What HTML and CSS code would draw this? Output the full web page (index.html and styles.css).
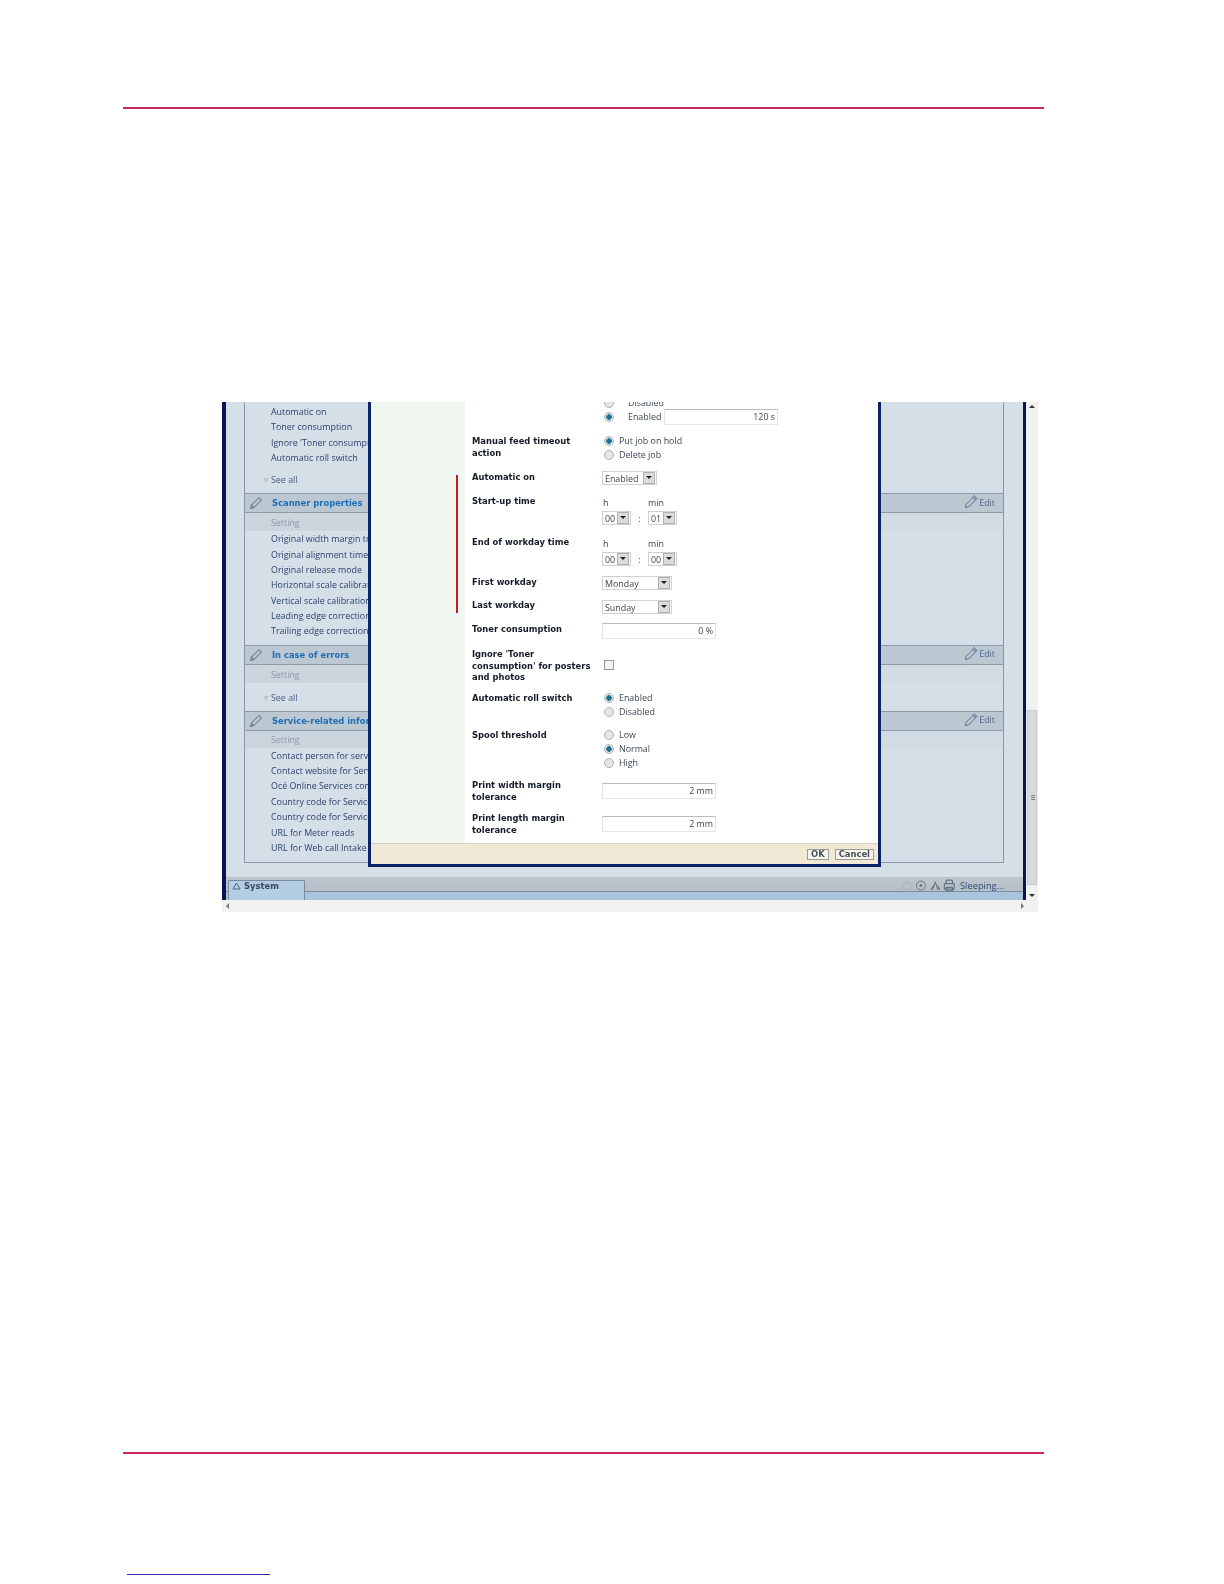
FILE: index.html
```html
<!DOCTYPE html>
<html lang="en">
<head>
<meta charset="utf-8">
<title>Settings</title>
<link rel="stylesheet" href="styles.css">
</head>
<body>
<div class="page">
  <div class="rule rule-top"></div>
  <div class="shot">
    <div class="app">
      <div class="app-main">
        <div class="panel">
          <div class="rows first">
            <div class="row">Automatic on</div>
            <div class="row">Toner consumption</div>
            <div class="row">Ignore 'Toner consumption' for posters</div>
            <div class="row">Automatic roll switch</div>
          </div>
          <div class="see">See all</div>
          <div class="sec-head">
            <svg class="pencil" viewBox="0 0 14 14"><path d="M1.500 12.500l1-3.500L10 1.500l2.500 2.500L5 11.500zM2.500 9l2.500 2.500" fill="none" stroke="#56677c" stroke-width="1"/></svg>
            <span class="sec-title">Scanner properties</span>
            <span class="edit"><svg class="pencil-e" viewBox="0 0 14 14"><path d="M1.500 12.500l.5-3L9 2.500l2.500 2.500L4.500 12zM9 1.500l1-1 3 3-1 1z" fill="none" stroke="#5a6f8e" stroke-width="1"/></svg>Edit</span>
          </div>
          <div class="setting">Setting</div>
          <div class="rows">
            <div class="row">Original width margin tolerance</div>
            <div class="row">Original alignment time</div>
            <div class="row">Original release mode</div>
            <div class="row">Horizontal scale calibration</div>
            <div class="row">Vertical scale calibration</div>
            <div class="row">Leading edge correction</div>
            <div class="row">Trailing edge correction</div>
          </div>
          <div class="sec-head sec-gap">
            <svg class="pencil" viewBox="0 0 14 14"><path d="M1.500 12.500l1-3.500L10 1.500l2.500 2.500L5 11.500zM2.500 9l2.500 2.500" fill="none" stroke="#56677c" stroke-width="1"/></svg>
            <span class="sec-title">In case of errors</span>
            <span class="edit"><svg class="pencil-e" viewBox="0 0 14 14"><path d="M1.500 12.500l.5-3L9 2.500l2.500 2.500L4.500 12zM9 1.500l1-1 3 3-1 1z" fill="none" stroke="#5a6f8e" stroke-width="1"/></svg>Edit</span>
          </div>
          <div class="setting">Setting</div>
          <div class="see see-short">See all</div>
          <div class="sec-head">
            <svg class="pencil" viewBox="0 0 14 14"><path d="M1.500 12.500l1-3.500L10 1.500l2.500 2.500L5 11.500zM2.500 9l2.500 2.500" fill="none" stroke="#56677c" stroke-width="1"/></svg>
            <span class="sec-title">Service-related information</span>
            <span class="edit"><svg class="pencil-e" viewBox="0 0 14 14"><path d="M1.500 12.500l.5-3L9 2.500l2.500 2.500L4.500 12zM9 1.500l1-1 3 3-1 1z" fill="none" stroke="#5a6f8e" stroke-width="1"/></svg>Edit</span>
          </div>
          <div class="setting setting-tight">Setting</div>
          <div class="rows">
            <div class="row">Contact person for service</div>
            <div class="row">Contact website for Service</div>
            <div class="row">Océ Online Services contact</div>
            <div class="row">Country code for Service</div>
            <div class="row">Country code for Service</div>
            <div class="row">URL for Meter reads</div>
            <div class="row">URL for Web call Intake</div>
          </div>
        </div>
      </div>
      <div class="app-bar">
        <div class="tab"><svg class="tab-tri" viewBox="0 0 9 8"><path d="M4.500 1L8 7H1z" fill="none" stroke="#52657c" stroke-width="1"/></svg>System</div>
        <div class="status">
          <svg class="st-icons" viewBox="0 0 60 14">
            <path d="M1 5h10v6H1zM3 5l1-2h4l1 2" fill="none" stroke="#a9b3ba" stroke-width="1"/>
            <circle cx="21" cy="7" r="5" fill="none" stroke="#5f6c78" stroke-width="1"/>
            <circle cx="21" cy="7" r="1.500" fill="#5f6c78"/>
            <path d="M34 12l3-9 3 9M32 12l3-5M42 12l-2-5" fill="none" stroke="#56626e" stroke-width="1"/>
            <path d="M49 5V1h7v4M47 5h11v6H47zM49 9h7v4h-7z" fill="none" stroke="#4a5a70" stroke-width="1"/>
          </svg>
          <span class="st-text">Sleeping...</span>
        </div>
      </div>
    </div>
    <div class="scrollbar">
      <span class="arrow-up"></span>
      <div class="thumb"><span class="grip"></span></div>
      <span class="arrow-down"></span>
    </div>
    <div class="hscroll"><span class="arrow-left"></span><span class="arrow-right"></span></div>

    <div class="dialog">
      <div class="dialog-body">
        <div class="dialog-side"><span class="red-bar"></span></div>
        <div class="form">
          <div class="lab"></div>
          <div class="ctl">
            <div class="opt wide"><span class="radio"></span><span class="opt-text">Disabled</span></div>
            <div class="opt wide"><span class="radio on"></span><span class="opt-text">Enabled</span><span class="input input-m">120 s</span></div>
          </div>
          <div class="lab">Manual feed timeout action</div>
          <div class="ctl c-up">
            <div class="opt"><span class="radio on"></span><span>Put job on hold</span></div>
            <div class="opt"><span class="radio"></span><span>Delete job</span></div>
          </div>
          <div class="lab">Automatic on</div>
          <div class="ctl"><span class="select s-en">Enabled<i class="btn"></i></span></div>
          <div class="lab">Start-up time</div>
          <div class="ctl c-2">
            <div class="time-labs"><span>h</span><span>min</span></div>
            <div class="time"><span class="select s-t">00<i class="btn"></i></span><b class="colon">:</b><span class="select s-t">01<i class="btn"></i></span></div>
          </div>
          <div class="lab">End of workday time</div>
          <div class="ctl c-2">
            <div class="time-labs"><span>h</span><span>min</span></div>
            <div class="time"><span class="select s-t">00<i class="btn"></i></span><b class="colon">:</b><span class="select s-t">00<i class="btn"></i></span></div>
          </div>
          <div class="lab">First workday</div>
          <div class="ctl"><span class="select s-day">Monday<i class="btn"></i></span></div>
          <div class="lab">Last workday</div>
          <div class="ctl c-1"><span class="select s-day">Sunday<i class="btn"></i></span></div>
          <div class="lab">Toner consumption</div>
          <div class="ctl"><span class="input input-m">0 %</span></div>
          <div class="lab">Ignore 'Toner consumption' for posters and photos</div>
          <div class="ctl c-12"><span class="check"></span></div>
          <div class="lab">Automatic roll switch</div>
          <div class="ctl c-up">
            <div class="opt"><span class="radio on"></span><span>Enabled</span></div>
            <div class="opt"><span class="radio"></span><span>Disabled</span></div>
          </div>
          <div class="lab">Spool threshold</div>
          <div class="ctl c-up">
            <div class="opt"><span class="radio"></span><span>Low</span></div>
            <div class="opt"><span class="radio on"></span><span>Normal</span></div>
            <div class="opt"><span class="radio"></span><span>High</span></div>
          </div>
          <div class="lab">Print width margin tolerance</div>
          <div class="ctl c-4"><span class="input input-m">2 mm</span></div>
          <div class="lab">Print length margin tolerance</div>
          <div class="ctl c-4"><span class="input input-m">2 mm</span></div>
        </div>
      </div>
      <div class="dialog-foot"><span class="fbtn">OK</span><span class="fbtn">Cancel</span></div>
    </div>
  </div>
  <div class="rule rule-bottom"></div>
  <div class="foot-link"></div>
</div>
</body>
</html>
```
FILE: styles.css
```css
* { box-sizing: border-box; }
html, body { margin: 0; padding: 0; background: #fff; }
body { font-family: "Liberation Sans", Arial, sans-serif; }
.page { width: 1224px; height: 1584px; padding-top: 107px; overflow: hidden; }
.rule { height: 2px; margin-left: 123px; width: 921px; background: #c8285a; }
.shot {
  position: relative; margin: 293px 0 0 222px; width: 816px; height: 510px;
  background: #f1f1f0; overflow: hidden; filter: blur(0.35px);
}
.rule-bottom { margin-top: 540px; }
.foot-link { height: 1px; width: 143px; margin: 120px 0 0 127px; background: #2a2ab0; }

.app { width: 804px; height: 498px; background: #d5dfe8; border-left: 4px solid #0b1450; border-right: 3px solid #0b1450; display: flex; flex-direction: column; }
.app-main { height: 475px; padding-left: 18px; padding-right: 19px; }
.panel { height: 461px; border: solid #8b97a4; border-width: 0 1px 1px 1px; }
.rows.first { padding-top: 2px; }
.row { height: 15.35px; padding-left: 26px; font: 8.9px/15.35px "Open Sans", "Liberation Sans", sans-serif; color: #2c3f6b; white-space: nowrap; }
.see { height: 28px; padding: 2px 0 0 26px; font: 8.9px/26px "Open Sans", sans-serif; color: #4a5e85; position: relative; }
.see::before { content: ""; position: absolute; left: 18px; top: 13px; border: 3.500px solid transparent; border-top: 5px solid #b9c6d3; border-bottom: 0; }
.see-short { height: 28px; padding-top: 2px; }
.sec-head {
  height: 20px; display: flex; align-items: center; background: #bcc8d1;
  border-top: 1px solid #8d99a5; border-bottom: 1px solid #8d99a5; padding: 0 8px 0 4px;
}
.sec-gap { margin-top: 6px; }
.pencil { width: 14px; height: 14px; flex: none; }
.sec-title { margin-left: 9px; font: bold 8.4px "DejaVu Sans", sans-serif; color: #1c6fb8; white-space: nowrap; }
.edit { margin: -2px 0 0 auto; display: flex; align-items: center; font: 8.9px "Open Sans", sans-serif; color: #50668c; }
.pencil-e { width: 14px; height: 14px; margin-right: 1px; }
.setting { height: 18px; padding-left: 26px; font: 8.9px/19px "Open Sans", sans-serif; color: #8e9aa8; background: linear-gradient(90deg, #cad4dd, #d0dae3 60%, #d1dbe4); }
.setting-tight { height: 17px; line-height: 18px; }

.app-bar { height: 23px; background: linear-gradient(#bdc6cd 0, #b6bfc8 63%, #7f8d9b 63%, #7f8d9b 67%, #a8c4df 67%); display: flex; align-items: flex-end; justify-content: space-between; padding-left: 2px; }
.tab { width: 77px; height: 20px; background: #b3cde5; border: 1px solid #7a8b9c; border-bottom: 0; border-radius: 2px 2px 0 0; font: bold 8.4px/11px "DejaVu Sans", sans-serif; color: #3a4a62; display: flex; align-items: flex-start; padding: 0 0 0 3px; }
.tab-tri { width: 9px; height: 8px; margin: 1px 3px 0 0; flex: none; }
.status { display: flex; align-items: center; height: 16px; padding-right: 19px; align-self: flex-start; }
.st-icons { width: 54px; height: 13px; }
.st-text { font: 9.3px "Open Sans", sans-serif; color: #2f4a7a; margin-left: 4px; }

.scrollbar { position: absolute; right: 0; top: 0; width: 12px; height: 498px; background: #f1f1f0; }
.thumb { position: absolute; left: 1px; right: 1px; top: 308px; height: 175px; background: #d7dadd; border: 1px solid #c6cacd; }
.grip { position: absolute; left: 3px; top: 84px; width: 4px; height: 5px; background: repeating-linear-gradient(#7d8287 0 1px, transparent 1px 2px); }
.arrow-up, .arrow-down { position: absolute; left: 3px; border: 3px solid transparent; }
.arrow-up { top: 3px; border-bottom: 3px solid #333; border-top: 0; }
.arrow-down { bottom: 3px; border-top: 3px solid #333; border-bottom: 0; }
.hscroll { height: 12px; position: relative; }
.arrow-left, .arrow-right { position: absolute; top: 3px; border: 3px solid transparent; }
.arrow-left { left: 4px; border-right: 3px solid #777; border-left: 0; }
.arrow-right { right: 14px; border-left: 3px solid #777; border-right: 0; }

.dialog { position: absolute; left: 146px; top: 0; width: 513px; height: 465px; background: #fff; border: solid #0b2264; border-width: 0 3px 3px 3px; display: flex; flex-direction: column; overflow: hidden; }
.dialog-body { flex: 1; display: flex; min-height: 0; }
.dialog-side { width: 94px; background: #f0f7f1; position: relative; flex: none; }
.red-bar { position: absolute; left: 85px; top: 73px; width: 2px; height: 138px; background: #c0201f; }
.form {
  margin-top: -6px; margin-left: 7px; display: grid; grid-template-columns: 130px 260px;
  grid-template-rows: 39px 36px 24px 41px 40px 23px 24px 25px 44px 37px 50px 33px 31px;
  font: 8.9px "Open Sans", sans-serif; color: #3c4650;
}
.lab { padding-top: 1px; font: bold 8.4px/11.6px "DejaVu Sans", sans-serif; color: #141b26; width: 124px; }
.ctl { min-width: 0; }
.c-up { margin-top: -1px; }
.c-1 { margin-top: 1px; }
.c-2 { margin-top: 2px; }
.c-4 { margin-top: 4px; }
.c-12 { margin-top: 12px; }
.opt { display: flex; align-items: center; height: 14px; line-height: 14px; padding-left: 2px; white-space: nowrap; }
.opt.wide:first-child { height: 15px; margin-top: -1px; }
.radio { width: 10px; height: 10px; border-radius: 50%; border: 1px solid #aeb2b5; background: #e6e6e6; margin-right: 5px; flex: none; }
.radio.on { background: radial-gradient(circle, #1a7290 0 2.500px, #dfe4e6 3px); }
.wide .radio { margin-right: 14px; }
.opt-text { width: 36px; flex: none; }
.input { display: block; background: #fff; border: 1px solid #e4e4e4; border-top-color: #bbb; text-align: right; padding-right: 2px; font: 8.9px/14px "Open Sans", sans-serif; color: #3c4650; flex: none; }
.input-m { width: 114px; height: 16px; }
.select { display: inline-flex; align-items: center; justify-content: space-between; height: 14px; background: #fff; border: 1px solid #d0d0d0; padding: 0 1px 0 2px; font: 8.9px "Open Sans", sans-serif; color: #3c4650; }
.btn { width: 12px; height: 12px; background: #dcdcdc; border: 1px solid #b0b0b0; position: relative; flex: none; }
.btn::after { content: ""; position: absolute; left: 2px; top: 3px; border: 3px solid transparent; border-top: 3px solid #222; border-bottom: 0; }
.s-en { width: 55px; }
.s-t { width: 29px; }
.s-day { width: 70px; }
.time-labs { display: flex; height: 12px; line-height: 12px; padding-left: 1px; }
.time-labs span:first-child { width: 45px; }
.time { display: flex; align-items: center; margin-top: 2px; }
.colon { width: 17px; text-align: center; font-weight: normal; }
.check { display: block; width: 10px; height: 10px; margin-left: 2px; border: 1px solid #9a9a9a; background: #f2f2f2; }
.dialog-foot { height: 21px; flex: none; background: #f1e9d6; border-top: 1px solid #d8d2c0; display: flex; align-items: center; justify-content: flex-end; gap: 6px; padding-right: 4px; }
.fbtn { height: 11px; padding: 0 3px; background: #f7f5ee; border: 1px solid #9a9a90; font: bold 8.4px/9px "DejaVu Sans", sans-serif; color: #46505a; }
```
